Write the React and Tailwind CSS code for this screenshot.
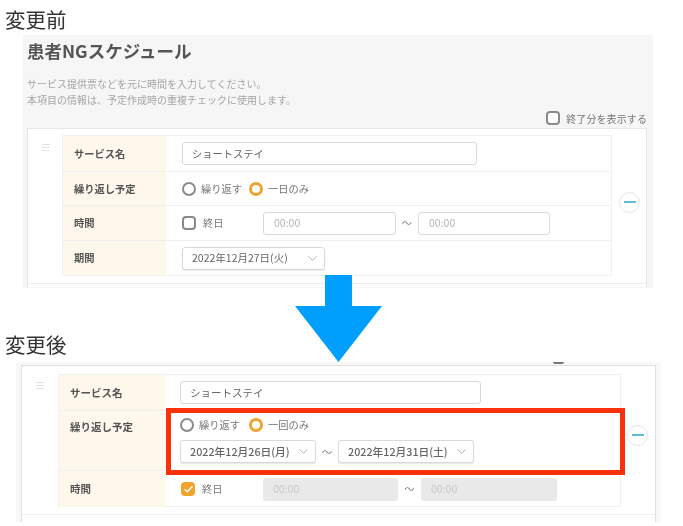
import React from "react";
import { ChevronDown, Check } from "lucide-react";

const Radio = ({ on }) => (
  <span
    className={
      on
        ? "w-[14px] h-[14px] rounded-full border-[3.5px] border-[#f2a32f] bg-white shrink-0"
        : "w-[14px] h-[14px] rounded-full border-2 border-[#8a8a8a] bg-white shrink-0"
    }
  />
);

const Checkbox = ({ on }) =>
  on ? (
    <span className="w-[14px] h-[14px] rounded-[4px] bg-[#f2a32f] flex items-center justify-center shrink-0">
      <Check size={11} strokeWidth={3} className="text-white" />
    </span>
  ) : (
    <span className="w-[14px] h-[14px] rounded-[4px] border-2 border-[#8a8a8a] bg-white shrink-0" />
  );

const Select = ({ children, className }) => (
  <div
    className={
      "h-[23px] flex items-center justify-between pl-[9px] pr-[4px] bg-white border border-[#d9d9d9] rounded-[3px] shadow-[0_1px_1px_#e8e8e8] text-[#666] " +
      className
    }
  >
    <span>{children}</span>
    <ChevronDown size={15} strokeWidth={1.25} className="text-[#999]" />
  </div>
);

const TimeBox = ({ className, disabled }) => (
  <div
    className={
      disabled
        ? "h-[23px] flex items-center pl-[10px] rounded-[3px] bg-[#e9e9e9] text-[10.5px] text-[#c8c8c8] " + className
        : "h-[23px] flex items-center pl-[10px] rounded-[3px] bg-white border border-[#d9d9d9] text-[10.5px] text-[#b5b5b5] " + className
    }
  >
    00:00
  </div>
);

const Row = ({ label, children, className, labelClass }) => (
  <div className={"flex border-b border-[#f0f0f0] last:border-b-0 " + className}>
    <div className={"shrink-0 bg-[#fdf7ec] pl-[11px] font-bold text-[#555] flex " + labelClass}>{label}</div>
    <div className="flex-1 flex flex-col justify-center">{children}</div>
  </div>
);

const Handle = () => (
  <div className="flex flex-col gap-[2px] w-[8px]">
    <span className="h-px bg-[#e2e2e2]" />
    <span className="h-px bg-[#e2e2e2]" />
    <span className="h-px bg-[#e2e2e2]" />
  </div>
);

const Minus = () => (
  <div className="w-[21px] h-[21px] rounded-full border border-[#dfe7ea] bg-white flex items-center justify-center">
    <span className="w-[12px] h-[2px] bg-[#62bcd8]" />
  </div>
);

const RadioLine = ({ second, gapClass }) => (
  <div className="flex items-center text-[10.25px] text-[#777]">
    <Radio />
    <span className={"ml-[5px] " + gapClass}>繰り返す</span>
    <Radio on />
    <span className="ml-[5px]">{second}</span>
  </div>
);

const App = () => {
  return (
    <div
      className="relative w-[683px] h-[526px] overflow-hidden bg-white blur-[0.35px]"
      style={{ fontFamily: '"Noto Sans CJK JP", "Liberation Sans", sans-serif' }}
    >
      <h2 className="pl-[5px] pt-[5px] h-[35px] text-[20.5px] leading-[28px] text-[#333]">変更前</h2>

      <section className="ml-[23px] w-[630px] h-[253px] bg-[#f6f6f6] pl-[4px] pr-[6px] overflow-hidden">
        <h1 className="pt-[4px] h-[36px] text-[17.5px] leading-[24px] font-bold text-[#555]">患者NGスケジュール</h1>
        <p className="mt-[5px] text-[10px] leading-[16px] text-[#a5a5a5]">
          サービス提供票などを元に時間を入力してください。
          <br />
          本項目の情報は、予定作成時の重複チェックに使用します。
        </p>
        <div className="mt-[1px] h-[18px] flex items-center justify-end gap-[6px] text-[10px] text-[#777]">
          <Checkbox />
          <span className="tracking-[0.1px]">終了分を表示する</span>
        </div>
        <div className="mt-[1px] h-[159px] bg-white border border-[#e6e6e6] border-b-0">
          <div className="h-[155px] border-b border-[#eeeeee] pt-[6px] pl-[34px] flex">
            <div className="pt-[9px] w-0">
              <div className="-ml-[20px]">
                <Handle />
              </div>
            </div>
            <div className="w-[550px] h-[141px] border border-[#f0f0f0]">
              <Row label="サービス名" className="h-[36px]" labelClass="w-[103px] items-center text-[10.25px]">
                <div className="ml-[16px] w-[295px] h-[23px] flex items-center pl-[9px] rounded-[3px] bg-white border border-[#d9d9d9] text-[10.25px] text-[#666]">
                  ショートステイ
                </div>
              </Row>
              <Row label="繰り返し予定" className="h-[34px]" labelClass="w-[103px] items-center text-[10.25px]">
                <div className="ml-[16px]">
                  <RadioLine second="一日のみ" gapClass="w-[48px]" />
                </div>
              </Row>
              <Row label="時間" className="h-[35px]" labelClass="w-[103px] items-center text-[10.25px]">
                <div className="ml-[16px] flex items-center text-[10.25px] text-[#777]">
                  <Checkbox />
                  <span className="ml-[7px] w-[60px]">終日</span>
                  <TimeBox className="w-[133px]" />
                  <span className="w-[22px] text-center text-[#888]">〜</span>
                  <TimeBox className="w-[132px]" />
                </div>
              </Row>
              <Row label="期間" className="h-[34px]" labelClass="w-[103px] items-center text-[10.25px]">
                <Select className="ml-[16px] w-[143px] text-[10.5px]">2022年12月27日(火)</Select>
              </Row>
            </div>
            <div className="ml-[7px] self-center -mt-[14px]">
              <Minus />
            </div>
          </div>
        </div>
      </section>

      <h2 className="pl-[5px] pt-[42px] h-[74px] text-[20.5px] leading-[28px] text-[#333]">変更後</h2>

      <section className="relative ml-[16px] w-[645px] h-[160px] bg-[#f8f8f8] px-[5px] pt-[3px] overflow-hidden">
        <span className="absolute left-[537px] top-[-2px] w-[11px] h-[4px] rounded-[2px] bg-[#777]" />
        <div className="h-[157px] bg-white border border-[#e0e0e0] border-b-0">
          <div className="h-[149px] border-b border-[#eeeeee] pt-[8px] pl-[36px] flex">
            <div className="pt-[8px] w-0">
              <div className="-ml-[22px]">
                <Handle />
              </div>
            </div>
            <div className="w-[563px] h-[133px] border border-[#f0f0f0]">
              <Row label="サービス名" className="h-[36px]" labelClass="w-[106px] items-center text-[10.5px]">
                <div className="ml-[15px] w-[301px] h-[23px] flex items-center pl-[9px] rounded-[3px] bg-white border border-[#d9d9d9] text-[10.5px] text-[#666]">
                  ショートステイ
                </div>
              </Row>
              <Row label="繰り返し予定" className="h-[60px]" labelClass="w-[106px] pt-[8px] text-[10.5px]">
                <div className="ml-[15px] pb-[1px]">
                  <RadioLine second="一回のみ" gapClass="w-[50px]" />
                  <div className="flex items-center mt-[8px]">
                    <Select className="w-[136px] text-[10.75px] font-medium">2022年12月26日(月)</Select>
                    <span className="w-[22px] text-center text-[10.5px] text-[#888]">〜</span>
                    <Select className="w-[136px] text-[10.75px] font-medium">2022年12月31日(土)</Select>
                  </div>
                </div>
              </Row>
              <Row label="時間" className="h-[36px]" labelClass="w-[106px] items-center text-[10.5px]">
                <div className="ml-[16px] flex items-center text-[10.25px] text-[#777]">
                  <Checkbox on />
                  <span className="ml-[7px] w-[61px]">終日</span>
                  <TimeBox className="w-[135px]" disabled />
                  <span className="w-[23px] text-center text-[#888]">〜</span>
                  <TimeBox className="w-[136px]" disabled />
                </div>
              </Row>
            </div>
            <div className="ml-[6px] self-center -mt-[18px]">
              <Minus />
            </div>
          </div>
        </div>
      </section>

      {/* red highlight */}
      <div className="absolute left-[166px] top-[408px] w-[459px] h-[67px] border-[5px] border-[#f9320a]" />

      {/* arrow */}
      <svg className="absolute left-[295px] top-[275px]" width="87" height="87" viewBox="0 0 87 87">
        <path d="M30 0H57V31H87L43.5 87L0 31H30Z" fill="#009ffd" />
      </svg>
    </div>
  );
};

export default App;
